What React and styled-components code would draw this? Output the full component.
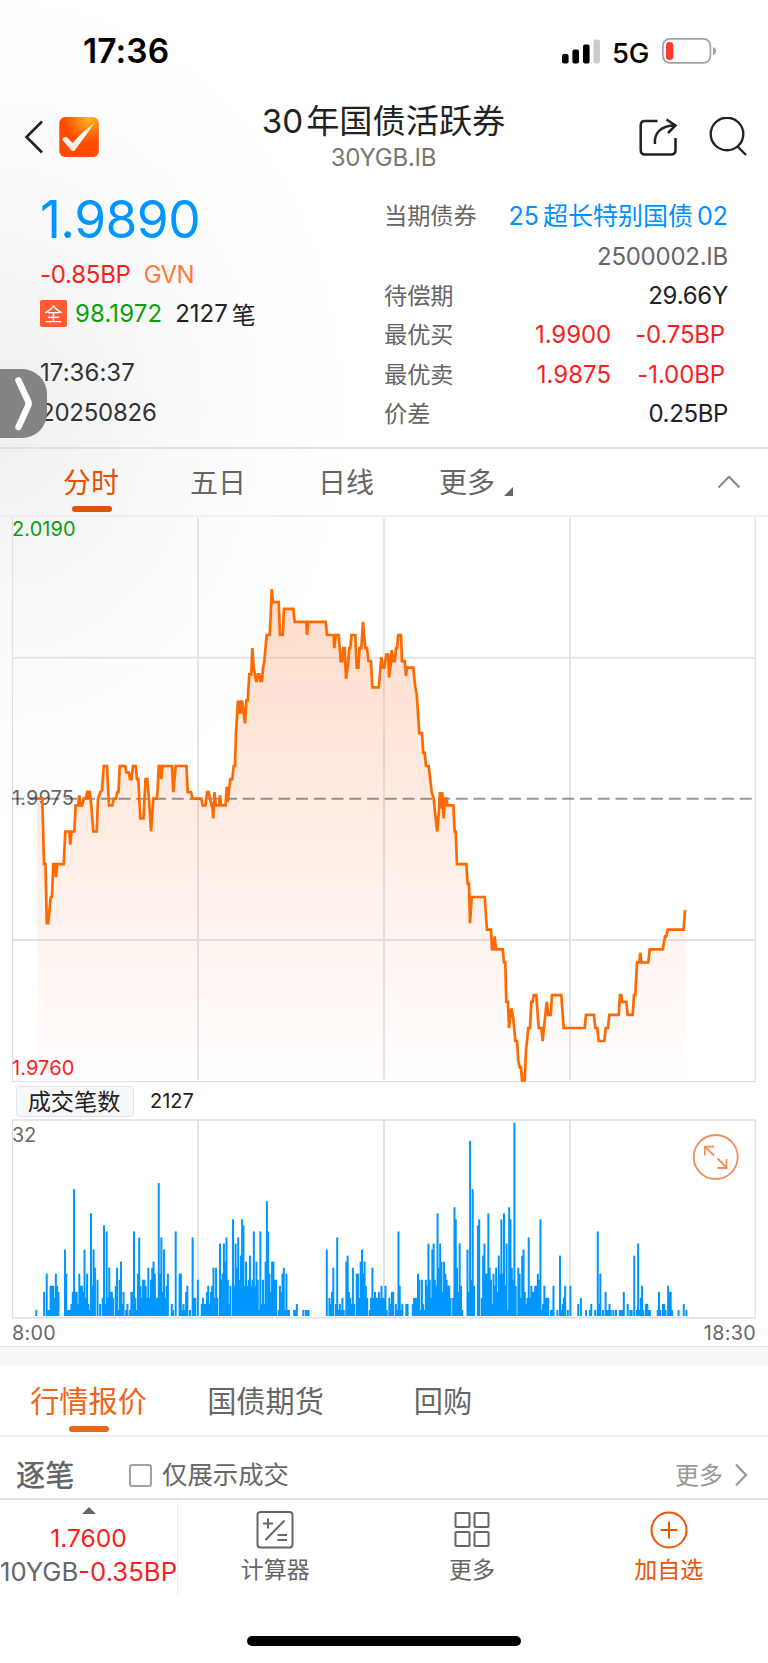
import React from 'react';
import styled, { createGlobalStyle } from 'styled-components';

const GlobalStyle = createGlobalStyle`
  * {
    box-sizing: border-box;
  }

  body {
    margin: 0;
    background: #fff;
    font-family: 'Inter', 'Noto Sans CJK SC', sans-serif;
    color: #222;
  }
`;

const Screen = styled.main`
  position: relative;
  width: 768px;
  height: 1663px;
  overflow: hidden;
  background: radial-gradient(ellipse 370px 440px at 0 410px, #efefef 0%, #f8f8f8 40%, #fdfdfd 75%, #fff 100%);
`;

const StatusBar = styled.div`
  display: flex;
  align-items: center;
  justify-content: space-between;
  height: 102px;
  padding: 0 52px 0 83px;
  color: #000;
`;

const Clock = styled.span`
  font-size: 33.5px;
  font-weight: 600;
  letter-spacing: 0.1px;
`;

const StatusIcons = styled.div`
  display: flex;
  align-items: center;
`;

const Network = styled.span`
  width: 50px;
  margin-left: 11px;
  padding-top: 3px;
  font-size: 27.5px;
  font-weight: 500;
  letter-spacing: -0.3px;
`;

const NavBar = styled.header`
  display: grid;
  grid-template-columns: 1fr auto 1fr;
  align-items: center;
  height: 78px;
  padding: 0 21px 0 24px;
`;

const NavLeft = styled.div`
  display: flex;
  align-items: center;
  gap: 14px;
  padding-bottom: 10px;
`;

const NavRight = styled.div`
  display: flex;
  align-items: center;
  justify-content: flex-end;
  gap: 32px;
  padding-bottom: 10px;
`;

const TitleBox = styled.div`
  padding-bottom: 5px;
  text-align: center;
  transform: translateX(-2px);
`;

const Title = styled.h1`
  margin: 0;
  font-size: 33.2px;
  font-weight: 400;
  line-height: 38px;
`;

const Digits = styled.span`
  margin-right: ${(p) => p.$right || 0}px;
  margin-left: ${(p) => p.$left || 0}px;
`;

const SubTitle = styled.div`
  font-size: 24px;
  line-height: 36px;
  letter-spacing: -0.2px;
  color: #777;
`;

const Quote = styled.section`
  display: flex;
  height: 269px;
  border-bottom: 2px solid #dfe1e8;
`;

const QuoteLeft = styled.div`
  width: 384px;
  padding: 2px 0 0 40px;
`;

const Price = styled.div`
  height: 73px;
  line-height: 74px;
  font-size: 51.5px;
  letter-spacing: -0.6px;
  color: #0096ff;
`;

const QuoteLine = styled.div`
  display: flex;
  align-items: center;
  height: 39px;
  margin-top: ${(p) => p.$top || 0}px;
  padding-top: ${(p) => (p.$low ? 2 : 0)}px;
  font-size: 24px;
  letter-spacing: ${(p) => p.$track || 0}px;
  color: ${(p) => p.$color || '#333'};
`;

const Part = styled.span`
  color: ${(p) => p.$color};
  margin-left: ${(p) => p.$left || 0}px;
  letter-spacing: ${(p) => p.$track || 0}px;
`;

const Badge = styled.span`
  display: flex;
  align-items: center;
  justify-content: center;
  width: 27px;
  height: 27px;
  padding-bottom: 2px;
  border-radius: 2px;
  background: #ff5b32;
  color: #fff;
  font-size: 18px;
`;

const QuoteRight = styled.div`
  flex: 1;
  padding: 15px 40px 0 0;
`;

const Field = styled.div`
  display: flex;
  align-items: center;
  height: ${(p) => p.$height || 39.3}px;
  font-size: 24px;
`;

const FieldName = styled.span`
  flex: 1;
  font-size: 23.2px;
  color: #666;
  padding-bottom: 3px;
`;

const FieldValue = styled.span`
  color: ${(p) => p.$color || '#222'};
  font-size: ${(p) => p.$size || 24}px;
  width: ${(p) => (p.$width ? `${p.$width}px` : 'auto')};
  margin-right: ${(p) => p.$right || 0}px;
  padding-bottom: ${(p) => p.$raise || 0}px;
  letter-spacing: ${(p) => p.$track || 0}px;
  text-align: right;
`;

const Handle = styled.button`
  position: absolute;
  left: 0;
  top: 369px;
  width: 47px;
  height: 69px;
  padding: 0;
  border: none;
  border-radius: 0 25px 25px 0;
  background: #838383;

  svg {
    display: block;
  }
`;

const Tabs = styled.nav`
  display: flex;
  align-items: stretch;
  height: ${(p) => p.$height}px;
  padding-left: ${(p) => p.$left}px;
  padding-right: 27px;
  border-bottom: 2px solid #eeeff2;
  background: ${(p) => p.$bg || 'transparent'};
`;

const Tab = styled.a`
  position: relative;
  display: flex;
  align-items: center;
  justify-content: center;
  width: ${(p) => p.$width}px;
  margin-right: ${(p) => p.$gap || 0}px;
  font-size: ${(p) => p.$size}px;
  color: ${(p) => (p.$active ? p.$active : '#666')};
  padding-bottom: 3px;

  &::after {
    content: '';
    position: absolute;
    bottom: 3.5px;
    left: calc(50% - 19.5px);
    width: 40px;
    height: 6px;
    border-radius: 3px;
    background: ${(p) => p.$active || 'transparent'};
  }
`;

const Corner = styled.span`
  align-self: flex-end;
  width: 0;
  height: 0;
  margin: 0 0 19px 7px;
  border-left: 9px solid transparent;
  border-bottom: 9px solid #666;
`;

const Collapse = styled.span`
  display: flex;
  align-items: center;
  margin-left: auto;
`;

const ChartSvg = styled.svg`
  display: block;
`;

const LegendBar = styled.div`
  display: flex;
  align-items: center;
  height: 36px;
  padding-left: 16px;
  font-size: 20px;
`;

const LegendButton = styled.span`
  display: flex;
  align-items: center;
  justify-content: center;
  width: 118px;
  height: 31px;
  margin-right: 16px;
  padding: 0 2px 2px 0;
  border: 1.5px solid #dfe2e8;
  border-radius: 4px;
  background: #f6f7f9;
  font-size: 23.2px;
`;

const VolumeBox = styled.div`
  position: relative;
`;

const Expand = styled.button`
  position: absolute;
  left: 692px;
  top: 15px;
  padding: 0;
  border: none;
  background: none;

  svg {
    display: block;
  }
`;

const TimeAxis = styled.div`
  display: flex;
  align-items: center;
  justify-content: space-between;
  height: 27px;
  padding: 1px 12px 0 12px;
  font-size: 19.7px;
  letter-spacing: 0.35px;
  color: #666;
`;

const Divider = styled.div`
  height: 20px;
  border-top: 1px solid #dfe2e8;
  background: #f5f7f9;
`;

const TickRow = styled.div`
  display: flex;
  align-items: center;
  height: 61px;
  padding: 15px 20px 0 16px;
  font-size: 25.4px;
  color: #666;
`;

const TickTitle = styled.b`
  width: 113px;
  padding-bottom: 4px;
  font-size: 29.2px;
  font-weight: 500;
`;

const Checkbox = styled.span`
  width: 23px;
  height: 23px;
  margin-right: 10px;
  border: 2px solid #a2a2a2;
  border-radius: 3px;
`;

const CheckLabel = styled.span`
  padding-bottom: 4px;
`;

const MoreLink = styled.span`
  display: flex;
  align-items: center;
  gap: 11px;
  margin-left: auto;
  font-size: 24px;
  color: #999;
`;

const BottomBar = styled.footer`
  display: flex;
  height: 97px;
  border-top: 2px solid #dfe1e8;
`;

const Ticker = styled.div`
  display: flex;
  flex-direction: column;
  align-items: center;
  width: 178px;
  flex-shrink: 0;
  padding-top: 7px;
  border-right: 1.5px solid #e9ebee;
  font-size: 24.6px;
  color: #fa1e1e;
  white-space: nowrap;
`;

const Arrow = styled.span`
  border-left: 7px solid transparent;
  border-right: 7px solid transparent;
  border-bottom: 7px solid #666;
`;

const TickerLine = styled.div`
  height: 34px;
  line-height: 34px;
  margin-top: ${(p) => p.$top || 0}px;
  font-size: ${(p) => p.$size || 24.6}px;
`;

const Action = styled.div`
  position: relative;
  left: -1px;
  display: flex;
  flex: 1;
  flex-direction: column;
  align-items: center;
  padding-top: 10px;
  font-size: 23px;
  line-height: 26px;
  color: ${(p) => p.$color || '#666'};

  svg {
    margin-bottom: 7px;
  }
`;

const HomeIndicator = styled.div`
  width: 274px;
  height: 10px;
  margin: 41px auto 0;
  border-radius: 5px;
  background: #000;
`;

// [x, steps of 0.0005 away from the reference price]
const prices = [
  [37, 0], [42.3, 0], [44, -10], [45.5, -10], [46.8, -19], [48.3, -19], [50.7, -15], [52, -15], [53.3, -10], [55, -10],
  [56, -12], [57.3, -10], [63.7, -10], [65.3, -5], [69.3, -5], [70.3, -7], [71.5, -5], [74.3, -5], [75.7, -1], [78, -1],
  [79.3, 0.5], [80.5, -1], [82.3, -1], [83.7, 0], [85.7, 0], [87.3, 1.2], [88.3, 0], [89.7, 1.2], [91.3, -1], [93.3, -5],
  [96.7, -5], [98, 0], [100.3, 1], [102, 1.3], [103.8, 5], [107, 5], [109, -1], [112.3, -1], [113.7, 0], [116, 0],
  [117.3, 1], [118.5, 1], [119.7, 5], [125.3, 5], [126.3, 4], [129, 4], [130, 3], [131.5, 3], [133, 5], [135.7, 5],
  [137, 3], [138.3, 3], [140.3, -3], [143.5, -3], [145.5, 3], [147.3, 3], [149, 0], [151, -5], [153.3, 0], [156.7, 0],
  [157.7, 1.5], [158.7, 5], [160, 5], [161.3, 3], [162.5, 5], [172, 5], [173.3, 1], [175.7, 5], [186.5, 5], [187.7, 1],
  [191, 1], [192.7, 0], [201.3, 0], [202.7, -1], [205.5, -1], [207, 1], [208.7, 1], [211.5, -1], [212.3, -1], [213.3, -3],
  [214.5, 1], [215.7, -1], [219, -1], [220, 0.5], [221, -1], [225.5, -1], [226.7, 1.8], [227.7, -0.5], [230.3, 3], [232.3, 3],
  [233.7, 5], [235, 5], [236, 10], [238, 15], [239, 13], [240, 15], [240.7, 13], [242, 15], [243.3, 13.5], [245, 11.5],
  [246.3, 15], [247.7, 15], [249.3, 19], [251.3, 19], [252.3, 23], [253.7, 20], [255, 19], [256.3, 17.8], [258, 19], [259.3, 19],
  [260.3, 18], [262, 18], [263, 20], [264.3, 21], [266.7, 25], [269.7, 25], [270.7, 28], [271.7, 32], [273, 30], [278.7, 30],
  [280, 25], [282.7, 25], [284, 29], [293.3, 29], [294.7, 27], [306.3, 27], [307, 25], [308.3, 27], [325.7, 27], [327, 25],
  [333.7, 25], [334.3, 23], [335.7, 25], [338.7, 25], [340.7, 21], [342.3, 21], [343.3, 23], [344.7, 23], [346, 18.3], [348, 20.5],
  [349.3, 23], [350.3, 23], [351.5, 25], [355.3, 25], [356.7, 20], [358.3, 20], [359.5, 23], [361.3, 23], [363, 27], [365.3, 23],
  [367, 23], [368.5, 21], [371, 21], [372.3, 17], [378.7, 17], [380.5, 20], [381.3, 21.6], [382.7, 20], [384.3, 20], [386.3, 22],
  [388.3, 22], [389, 18.5], [390.7, 20.5], [391.7, 22.7], [393, 21], [394.7, 21], [396, 23], [397, 23], [398.3, 25], [401, 25],
  [402, 21], [404.7, 21], [406, 18.7], [407, 20], [413.3, 20], [415.3, 17], [416.7, 16], [419.3, 10], [422, 10], [423.3, 7],
  [424.7, 7], [426, 5], [428.7, 5], [431.7, 1], [433.7, 0], [435.3, -2.5], [437.3, -5], [439, -1.7], [440, 1], [441, -1.5],
  [442.3, 1], [443.7, -3], [445, 0], [446.7, 0], [447.3, -1], [453.3, -1], [454.7, -5], [455.7, -5], [457, -10], [466.3, -10],
  [467.7, -13], [469, -13], [470, -19], [471.7, -15], [484.7, -15], [487, -20], [491, -20], [492, -23], [493.3, -23], [494.7, -21],
  [496, -23], [502.7, -23], [504, -25], [505.3, -25], [506.3, -31], [508, -31], [509, -35], [511.3, -32], [513.3, -33.5], [515.3, -37],
  [517, -37], [518.3, -40], [519.7, -41], [521, -41], [522, -43], [524.7, -43], [526, -38.5], [528.3, -35], [530, -35], [531.3, -31],
  [532.7, -31], [533.7, -30], [536.3, -30], [538.7, -35], [541.3, -35], [542.7, -37], [544.3, -34.5], [546.7, -31], [548.3, -33], [550.7, -33],
  [552, -30], [561.3, -30], [563.7, -35], [584.7, -35], [586, -33], [594, -33], [595.3, -35], [597.3, -35], [598.7, -37], [604.3, -37],
  [605.7, -35], [608, -35], [609.3, -33], [618.7, -33], [620, -30], [621.3, -30], [622, -31], [626.3, -31], [627.7, -33], [632.7, -33],
  [634, -30], [635.3, -30], [637, -25], [639.3, -25], [640.3, -23.5], [641.3, -25], [648.3, -25], [649.7, -23], [662.7, -23], [665, -21],
  [666.3, -21], [667.7, -20], [683.7, -20], [685, -17],
];

// trades per minute from the open
const trades = [
  1, 0, 0, 0, 0, 0, 4, 0, 7, 1, 1, 5, 5, 5, 3, 7, 5, 4, 0, 0,
  0, 0, 11, 7, 1, 1, 1, 2, 4, 21, 4, 4, 2, 7, 5, 5, 4, 11, 3, 7,
  2, 1, 17, 5, 11, 8, 0, 6, 0, 2, 0, 3, 15, 2, 14, 3, 8, 4, 4, 3,
  0, 5, 8, 1, 6, 9, 2, 4, 0, 1, 2, 0, 1, 4, 4, 14, 3, 1, 7, 13,
  5, 3, 6, 6, 5, 3, 8, 3, 6, 8, 9, 7, 3, 3, 22, 7, 13, 4, 11, 3,
  5, 7, 0, 0, 2, 1, 0, 14, 0, 0, 7, 7, 1, 2, 1, 4, 5, 0, 1, 0,
  13, 3, 3, 0, 6, 0, 0, 2, 3, 2, 2, 4, 5, 2, 4, 5, 8, 3, 8, 3,
  0, 12, 6, 7, 12, 9, 13, 6, 2, 5, 0, 16, 5, 12, 8, 13, 6, 10, 16, 15,
  5, 9, 5, 6, 10, 5, 6, 14, 5, 9, 6, 1, 14, 2, 6, 2, 9, 19, 14, 7,
  4, 9, 9, 6, 6, 0, 1, 5, 4, 7, 8, 1, 7, 1, 1, 0, 0, 0, 1, 1,
  2, 0, 0, 0, 0, 1, 0, 1, 1, 1, 0, 0, 0, 0, 0, 0, 0, 0, 0, 0,
  0, 0, 0, 11, 0, 3, 2, 4, 8, 0, 2, 13, 1, 2, 1, 3, 1, 0, 9, 10,
  4, 3, 2, 8, 2, 0, 7, 7, 3, 9, 11, 7, 9, 5, 3, 0, 1, 3, 8, 3,
  4, 3, 3, 4, 3, 5, 3, 3, 5, 1, 0, 3, 2, 4, 4, 0, 2, 1, 14, 5,
  1, 2, 0, 0, 2, 2, 0, 0, 0, 2, 3, 3, 3, 7, 6, 1, 6, 2, 1, 6,
  5, 12, 6, 3, 11, 12, 6, 5, 17, 8, 12, 9, 4, 9, 7, 6, 5, 5, 3, 0,
  3, 18, 16, 8, 4, 12, 5, 1, 0, 0, 0, 11, 4, 29, 6, 21, 5, 0, 0, 15,
  16, 0, 3, 10, 12, 7, 7, 17, 8, 6, 2, 7, 5, 8, 4, 10, 7, 16, 7, 17,
  5, 12, 1, 18, 16, 8, 6, 32, 5, 0, 8, 7, 3, 10, 11, 4, 2, 3, 13, 3,
  5, 4, 4, 5, 5, 7, 6, 16, 1, 2, 5, 3, 3, 3, 0, 1, 1, 5, 0, 0,
  1, 0, 10, 1, 2, 3, 5, 0, 1, 0, 5, 0, 0, 0, 0, 0, 2, 0, 3, 0,
  0, 0, 1, 0, 0, 1, 2, 0, 0, 1, 0, 14, 2, 7, 0, 1, 0, 4, 1, 1,
  2, 1, 0, 1, 0, 1, 0, 0, 1, 1, 1, 4, 0, 0, 2, 0, 1, 1, 0, 10,
  0, 1, 12, 1, 3, 5, 1, 0, 2, 2, 1, 1, 0, 0, 0, 0, 0, 1, 4, 1,
  0, 2, 2, 1, 0, 5, 4, 4, 1, 0, 0, 0, 0, 1, 0, 0, 0, 2, 0, 1,
];

const MID = 798.7;
const STEP = 6.55;
const GRID_X = [198, 384, 570];

const PriceChart = () => {
  const line = prices.map(([x, n]) => `${x},${(MID - n * STEP).toFixed(1)}`).join(' ');
  return (
    <ChartSvg width="768" height="566" viewBox="0 517 768 566">
      <defs>
        <linearGradient id="area" gradientUnits="userSpaceOnUse" x1="0" y1="590" x2="0" y2="1081">
          <stop offset="0" stopColor="#ff6a10" stopOpacity="0.23" />
          <stop offset="1" stopColor="#ff6a40" stopOpacity="0.01" />
        </linearGradient>
      </defs>
      <g stroke="#e2e6ec" strokeWidth="2">
        {GRID_X.map((x) => (
          <line key={x} x1={x} x2={x} y1="518" y2="1079.5" />
        ))}
        <line x1="12" x2="756" y1="657.7" y2="657.7" />
        <line x1="12" x2="756" y1="940" y2="940" />
      </g>
      <path d="M12.5 517V1081.5H755.3V517" fill="none" stroke="#dcdfe5" strokeWidth="1.2" />
      <g fontSize="20" letterSpacing="0.1">
        <text x="12" y="536" fill="#0a9f0a">2.0190</text>
        <text x="12" y="805.3" fill="#666">1.9975</text>
        <text x="12" y="1074.5" fill="#fa1e1e">1.9760</text>
      </g>
      <polygon points={`37,1081 ${line} 686,1000 686,1081`} fill="url(#area)" />
      <line x1="12" x2="755" y1={MID} y2={MID} stroke="#000" strokeOpacity="0.4" strokeWidth="2" strokeDasharray="12 5.75" />
      <polyline points={line} fill="none" stroke="#ff6a00" strokeWidth="2.7" strokeMiterlimit="3" />
    </ChartSvg>
  );
};

const VolumeChart = () => (
  <ChartSvg width="768" height="200" viewBox="0 1119 768 200">
    <g stroke="#e2e4eb" strokeWidth="2">
      {GRID_X.map((x) => (
        <line key={x} x1={x} x2={x} y1="1120" y2="1316" />
      ))}
    </g>
    <path d="M12.5 1317V1120M755.3 1120V1316" stroke="#dcdfe5" strokeWidth="1.2" />
    <path d="M12 1120H756M12 1317.7H756" stroke="#dcdfe5" strokeWidth="1.6" />
    <text x="12" y="1142" fontSize="19.7" fill="#666">32</text>
    <g fill="#0096ff">
      {trades.map((n, i) => (
        n > 0 && <rect key={i} x={(35.3 + i * 1.3027).toFixed(2)} y={1316 - n * 6.04} width="2" height={n * 6.04} />
      ))}
    </g>
  </ChartSvg>
);

const SignalIcon = () => (
  <svg width="39" height="25" viewBox="0 0 39 25">
    <rect x="0" y="15" width="6.6" height="9.5" rx="2" />
    <rect x="10.4" y="10.5" width="6.6" height="14" rx="2" />
    <rect x="21" y="5.5" width="6.6" height="19" rx="2" />
    <rect x="31.4" y="0.5" width="6.6" height="24" rx="2" fill="#cbcbcb" />
  </svg>
);

const BatteryIcon = () => (
  <svg width="54" height="26" viewBox="0 0 54 26">
    <rect x="0.9" y="0.9" width="47.5" height="24" rx="7" fill="none" stroke="#a3a3a3" strokeWidth="1.7" />
    <path d="M51 9q3 1 3 4t-3 4z" fill="#a3a3a3" />
    <rect x="4" y="4" width="7.3" height="18" rx="3.4" fill="#ff3a30" />
  </svg>
);

const LogoIcon = () => (
  <svg width="40" height="40" viewBox="0 0 40 40">
    <defs>
      <radialGradient id="logoBg" cx="0.75" cy="0" r="0.65">
        <stop offset="0" stopColor="#ffc01c" />
        <stop offset="0.5" stopColor="#ff8010" />
        <stop offset="1" stopColor="#ff4a00" />
      </radialGradient>
      <linearGradient id="logoTick" x1="1" y1="0" x2="0.3" y2="1">
        <stop offset="0" stopColor="#ffd9a8" />
        <stop offset="0.5" stopColor="#fff" />
        <stop offset="1" stopColor="#f4e4de" />
      </linearGradient>
    </defs>
    <rect x="0.3" width="39.5" height="40" rx="6" fill="url(#logoBg)" />
    <path d="M3 22.5Q4.500 19.500 8 20.200L13.500 26Q23 15 36 5.500Q27 18 16.500 32.500Q14.500 35.500 12.300 33.300Z" fill="url(#logoTick)" />
  </svg>
);

const App = () => {
  return (
    <>
      <GlobalStyle />
      <Screen>
        <StatusBar>
          <Clock>17:36</Clock>
          <StatusIcons>
            <SignalIcon />
            <Network>5G</Network>
            <BatteryIcon />
          </StatusIcons>
        </StatusBar>

        <NavBar>
          <NavLeft>
            <svg width="21" height="36" viewBox="0 0 21 36" fill="none" stroke="#222" strokeWidth="2.6">
              <path d="M18 2.500L2.500 18L18 33.500" />
            </svg>
            <LogoIcon />
          </NavLeft>
          <TitleBox>
            <Title><Digits $right={3}>30</Digits>年国债活跃券</Title>
            <SubTitle>30YGB.IB</SubTitle>
          </TitleBox>
          <NavRight>
            <svg width="38" height="40" viewBox="0 0 38 40" fill="none" stroke="#222" strokeWidth="2.5">
              <path d="M18.500 4H6Q1.700 4 1.700 8.500V33Q1.700 37.500 6 37.500H32Q36.500 37.500 36.500 33V21" />
              <path d="M16 27C15 17 21 8.500 36 8.500M27.500 2.500L36.500 8.500L29 16" />
            </svg>
            <svg width="38" height="40" viewBox="0 0 38 40" fill="none" stroke="#222" strokeWidth="2.4">
              <circle cx="18" cy="17" r="16.3" />
              <path d="M28 29L37 38" />
            </svg>
          </NavRight>
        </NavBar>

        <Quote>
          <QuoteLeft>
            <Price>1.9890</Price>
            <QuoteLine>
              <Part $color="#fa1e1e" $track={-0.25}>-0.85BP</Part>
              <Part $color="#ff7a3c" $left={13} $track={-0.6}>GVN</Part>
            </QuoteLine>
            <QuoteLine>
              <Badge>全</Badge>
              <Part $color="#0a9f0a" $left={8} $track={0.1}>98.1972</Part>
              <Part $color="#222" $left={13}>2127</Part>
              <Part $color="#222" $left={4}>笔</Part>
            </QuoteLine>
            <QuoteLine $top={20} $track={0.05}>17:36:37</QuoteLine>
            <QuoteLine $low $track={-0.25}>20250826</QuoteLine>
          </QuoteLeft>
          <QuoteRight>
            <Field $height={41}>
              <FieldName>当期债券</FieldName>
              <FieldValue $color="#0090ff" $size={25} $raise={4}>
                <Digits $right={4}>25</Digits>超长特别国债<Digits $left={4}>02</Digits>
              </FieldValue>
            </Field>
            <Field $height={40}>
              <FieldName />
              <FieldValue $color="#666" $track={-0.25}>2500002.IB</FieldValue>
            </Field>
            <Field>
              <FieldName>待偿期</FieldName>
              <FieldValue $track={-0.25}>29.66Y</FieldValue>
            </Field>
            <Field>
              <FieldName>最优买</FieldName>
              <FieldValue $color="#fa1e1e" $track={-0.1}>1.9900</FieldValue>
              <FieldValue $color="#fa1e1e" $width={114} $right={3} $track={-0.2}>-0.75BP</FieldValue>
            </Field>
            <Field>
              <FieldName>最优卖</FieldName>
              <FieldValue $color="#fa1e1e">1.9875</FieldValue>
              <FieldValue $color="#fa1e1e" $width={114} $right={3} $track={-0.1}>-1.00BP</FieldValue>
            </Field>
            <Field>
              <FieldName>价差</FieldName>
              <FieldValue $track={-0.35}>0.25BP</FieldValue>
            </Field>
          </QuoteRight>
        </Quote>

        <Tabs $height={68} $left={61}>
          <Tab $width={60} $gap={67} $size={28} $active="#e65005">分时</Tab>
          <Tab $width={60} $gap={68} $size={28}>五日</Tab>
          <Tab $width={60} $gap={61} $size={28}>日线</Tab>
          <Tab $width={60} $size={28}>更多</Tab>
          <Corner />
          <Collapse>
            <svg width="24" height="14" viewBox="0 0 24 14" fill="none" stroke="#888" strokeWidth="2">
              <path d="M1.500 12.500L12 1.700L22.500 12.500" />
            </svg>
          </Collapse>
        </Tabs>

        <PriceChart />
        <LegendBar>
          <LegendButton>成交笔数</LegendButton>
          2127
        </LegendBar>
        <VolumeBox>
          <VolumeChart />
          <Expand aria-label="expand">
            <svg width="47" height="47" viewBox="0 0 47 47" fill="none" stroke="#f48c55" strokeWidth="1.8">
              <circle cx="23.700" cy="23" r="22" />
              <path d="M22 21.500L13.300 13M12.800 21.500V12.700H22M25.500 24.500L34.500 33.500M25.500 34H34.500V25" />
            </svg>
          </Expand>
        </VolumeBox>
        <TimeAxis>
          <span>8:00</span>
          <span>18:30</span>
        </TimeAxis>
        <Divider />

        <Tabs $height={71} $left={28} $bg="#fff">
          <Tab $width={121} $gap={56} $size={29.2} $active="#f06418">行情报价</Tab>
          <Tab $width={121} $gap={84} $size={29.2}>国债期货</Tab>
          <Tab $width={66} $size={29.2}>回购</Tab>
        </Tabs>
        <TickRow>
          <TickTitle>逐笔</TickTitle>
          <Checkbox />
          <CheckLabel>仅展示成交</CheckLabel>
          <MoreLink>
            <CheckLabel>更多</CheckLabel>
            <svg width="14" height="24" viewBox="0 0 14 24" fill="none" stroke="#999" strokeWidth="2.2">
              <path d="M2 1.500L12 12L2 22.500" />
            </svg>
          </MoreLink>
        </TickRow>

        <BottomBar>
          <Ticker>
            <Arrow />
            <TickerLine $top={7}>1.7600</TickerLine>
            <TickerLine $size={25.7}><Part $color="#666">10YGB</Part>-0.35BP</TickerLine>
          </Ticker>
          <Action>
            <svg width="38" height="40" viewBox="0 0 38 40" fill="none" stroke="#666" strokeWidth="2">
              <rect x="1.500" y="2" width="35" height="35.500" rx="3" />
              <path d="M7 13.500H17M12 8.500V18.500M28.500 10.500L9.500 30M21.500 25H31M21.500 30H31" />
            </svg>
            计算器
          </Action>
          <Action>
            <svg width="38" height="40" viewBox="0 0 38 40" fill="none" stroke="#666" strokeWidth="2">
              <rect x="2.500" y="3" width="14" height="14" rx="1" />
              <rect x="21.500" y="3" width="14" height="14" rx="1" />
              <rect x="2.500" y="22" width="14" height="14" rx="1" />
              <rect x="21.500" y="22" width="14" height="14" rx="1" />
            </svg>
            更多
          </Action>
          <Action $color="#ea5404">
            <svg width="38" height="40" viewBox="0 0 38 40" fill="none" stroke="#ea5404" strokeWidth="2">
              <circle cx="19" cy="20" r="17.500" />
              <path d="M10.500 20H27.500M19 11.500V28.500" />
            </svg>
            加自选
          </Action>
        </BottomBar>
        <HomeIndicator />

        <Handle aria-label="open">
          <svg width="47" height="69" viewBox="0 0 47 69" fill="none" stroke="#fff" strokeWidth="6.500" strokeLinecap="round" strokeLinejoin="round">
            <path d="M18.500 11.500L28.500 33V36L18.500 58" />
          </svg>
        </Handle>
      </Screen>
    </>
  );
};

export default App;
